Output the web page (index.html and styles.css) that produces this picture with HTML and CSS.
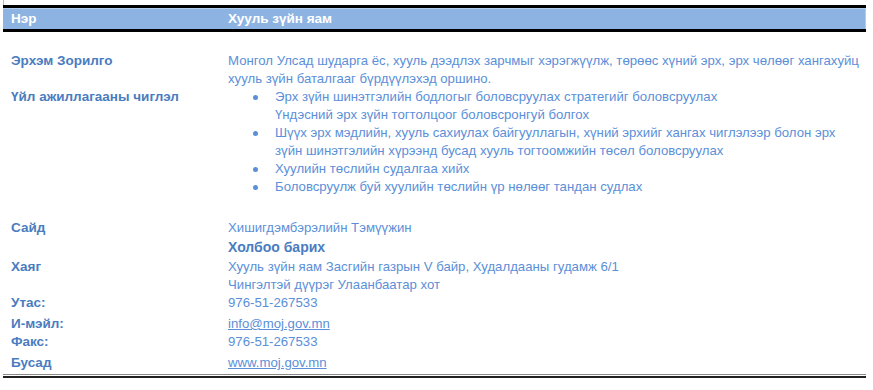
FILE: index.html
```html
<!DOCTYPE html>
<html lang="mn">
<head>
<meta charset="utf-8">
<title>Хууль зүйн яам</title>
<link rel="stylesheet" href="styles.css">
</head>
<body>
<div class="tick"></div>
<div class="sheet">
  <div class="head">
    <div class="hcell">Нэр</div>
    <div class="hcell">Хууль зүйн яам</div>
  </div>
  <div class="body">
    <div class="row r-goal">
      <div class="label">Эрхэм Зорилго</div>
      <div class="value">Монгол Улсад шударга ёс, хууль дээдлэх зарчмыг хэрэгжүүлж, төрөөс хүний эрх, эрх чөлөөг хангахуйц хууль зүйн баталгааг бүрдүүлэхэд оршино.</div>
    </div>
    <div class="row">
      <div class="label">Үйл ажиллагааны чиглэл</div>
      <ul class="value list">
        <li>Эрх зүйн шинэтгэлийн бодлогыг боловсруулах стратегийг боловсруулах<br>Үндэсний эрх зүйн тогтолцоог боловсронгуй болгох</li>
        <li>Шүүх эрх мэдлийн, хууль сахиулах байгууллагын, хүний эрхийг хангах чиглэлээр болон эрх зүйн шинэтгэлийн хүрээнд бусад хууль тогтоомжийн төсөл боловсруулах</li>
        <li>Хуулийн төслийн судалгаа хийх</li>
        <li>Боловсруулж буй хуулийн төслийн үр нөлөөг тандан судлах</li>
      </ul>
    </div>
    <div class="row r-minister">
      <div class="label">Сайд</div>
      <div class="value">Хишигдэмбэрэлийн Тэмүүжин</div>
    </div>
    <div class="row r-contact">
      <div class="label"></div>
      <div class="value subhead">Холбоо барих</div>
    </div>
    <div class="row">
      <div class="label">Хаяг</div>
      <div class="value">Хууль зүйн яам Засгийн газрын V байр, Худалдааны гудамж 6/1<br>Чингэлтэй дүүрэг Улаанбаатар хот</div>
    </div>
    <div class="row">
      <div class="label">Утас:</div>
      <div class="value">976-51-267533</div>
    </div>
    <div class="row r-link">
      <div class="label">И-мэйл:</div>
      <div class="value"><a class="link" href="#">info@moj.gov.mn</a></div>
    </div>
    <div class="row">
      <div class="label">Факс:</div>
      <div class="value">976-51-267533</div>
    </div>
    <div class="row r-link">
      <div class="label">Бусад</div>
      <div class="value"><a class="link" href="#">www.moj.gov.mn</a></div>
    </div>
  </div>
  <div class="foot"></div>
</div>
</body>
</html>
```
FILE: styles.css
```css
html, body {
  margin: 0;
  padding: 0;
  background: #ffffff;
}
body {
  font-family: "Liberation Sans", Arial, sans-serif;
  font-size: 13.2px;
  line-height: 18px;
  color: #5b8fd8;
  position: relative;
}
.tick {
  position: absolute;
  left: 3px;
  top: 0;
  width: 1px;
  height: 5px;
  background: #bbbbbb;
}
.sheet {
  margin: 5px 0 0 3px;
  width: 863px;
}
.head {
  display: grid;
  grid-template-columns: 217px 1fr;
  border-top: 3px solid #000000;
  border-bottom: 3px solid #000000;
  background: #8db3e2;
  box-shadow: inset 0 1px 0 #b0cbec, inset -1px 0 0 #b0cbec;
  height: 21px;
  padding-left: 8px;
  color: #ffffff;
  font-weight: bold;
  font-size: 13.5px;
  line-height: 21px;
}
.body {
  padding-top: 20px;
}
.row {
  display: grid;
  grid-template-columns: 217px 1fr;
  padding-left: 8px;
}
.label {
  color: #4a7cc0;
  font-weight: bold;
  font-size: 13.5px;
}
.value {
  margin: 0;
  padding-right: 6px;
}
.list {
  list-style: none;
  padding-left: 0;
}
.list li {
  position: relative;
  padding-left: 47px;
}
.list li::before {
  content: "";
  position: absolute;
  left: 25px;
  top: 7px;
  width: 5px;
  height: 5px;
  border-radius: 50%;
  background: #5b8fd8;
}
.r-minister {
  margin-top: 23px;
}
.subhead {
  color: #4a7cc0;
  font-weight: bold;
  font-size: 14px;
  line-height: 21px;
}
.r-link {
  margin-top: 3px;
}
.link {
  color: #5b8fd8;
  text-decoration: underline;
}
.foot {
  margin-top: 2px;
  border-top: 1px solid #8a8a8a;
  border-bottom: 2px solid #222222;
  height: 1px;
  background: #ffffff;
}
```
